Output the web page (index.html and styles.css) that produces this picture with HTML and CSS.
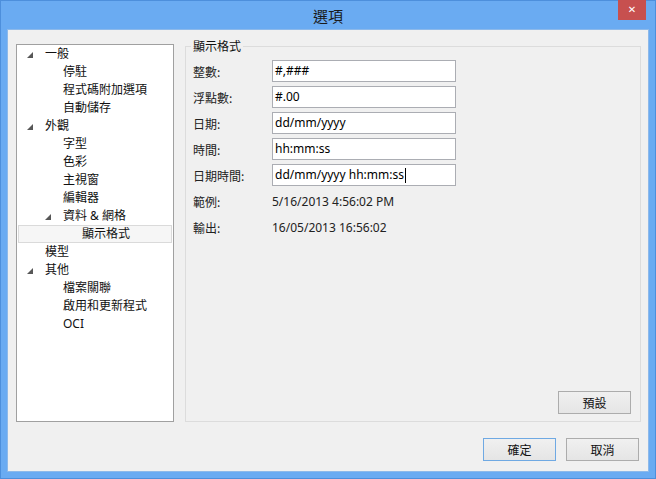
FILE: index.html
```html
<!DOCTYPE html>
<html lang="zh-Hant">
<head>
<meta charset="utf-8">
<title>選項</title>
<link rel="stylesheet" href="styles.css">
</head>
<body>
<div class="window">
  <div class="titlebar">
    <span></span>
    <span class="title">選項</span>
    <span class="close">&#x2715;</span>
  </div>
  <div class="content">
    <div class="main">
      <div class="tree">
        <div class="node l0"><span class="tw"><svg width="6" height="6" viewBox="0 0 6 6"><polygon points="6,0 6,6 0,6"/></svg></span>一般</div>
        <div class="node l1"><span class="tw"></span>停駐</div>
        <div class="node l1"><span class="tw"></span>程式碼附加選項</div>
        <div class="node l1"><span class="tw"></span>自動儲存</div>
        <div class="node l0"><span class="tw"><svg width="6" height="6" viewBox="0 0 6 6"><polygon points="6,0 6,6 0,6"/></svg></span>外觀</div>
        <div class="node l1"><span class="tw"></span>字型</div>
        <div class="node l1"><span class="tw"></span>色彩</div>
        <div class="node l1"><span class="tw"></span>主視窗</div>
        <div class="node l1"><span class="tw"></span>編輯器</div>
        <div class="node l1"><span class="tw"><svg width="6" height="6" viewBox="0 0 6 6"><polygon points="6,0 6,6 0,6"/></svg></span>資料 &amp; 網格</div>
        <div class="node l2 selected"><span class="tw"></span>顯示格式</div>
        <div class="node l0"><span class="tw"></span>模型</div>
        <div class="node l0"><span class="tw"><svg width="6" height="6" viewBox="0 0 6 6"><polygon points="6,0 6,6 0,6"/></svg></span>其他</div>
        <div class="node l1"><span class="tw"></span>檔案關聯</div>
        <div class="node l1"><span class="tw"></span>啟用和更新程式</div>
        <div class="node l1"><span class="tw"></span>OCI</div>
      </div>
      <fieldset class="group">
        <legend>顯示格式</legend>
        <div class="form">
          <span class="lbl">整數:</span><div class="box">#,###</div>
          <span class="lbl">浮點數:</span><div class="box">#.00</div>
          <span class="lbl">日期:</span><div class="box">dd/mm/yyyy</div>
          <span class="lbl">時間:</span><div class="box">hh:mm:ss</div>
          <span class="lbl">日期時間:</span><div class="box">dd/mm/yyyy hh:mm:ss<span class="caret"></span></div>
          <span class="lbl">範例:</span><span class="val">5/16/2013 4:56:02 PM</span>
          <span class="lbl">輸出:</span><span class="val">16/05/2013 16:56:02</span>
        </div>
        <div class="group-foot">
          <button class="btn">預設</button>
        </div>
      </fieldset>
    </div>
    <div class="buttons">
      <button class="btn default">確定</button>
      <button class="btn">取消</button>
    </div>
  </div>
</div>
</body>
</html>
```
FILE: styles.css
```css
html, body {
  margin: 0;
  padding: 0;
}
body {
  width: 656px;
  height: 479px;
  font-family: "Noto Sans", "Noto Sans CJK TC", sans-serif;
  font-size: 12px;
  color: #000;
}
.window {
  box-sizing: border-box;
  width: 656px;
  height: 479px;
  background: #6aabf2;
  border: 1px solid #4d8fdc;
  padding: 0 7px 7px 7px;
  display: flex;
  flex-direction: column;
}
.titlebar {
  height: 29px;
  display: grid;
  grid-template-columns: 1fr auto 1fr;
  align-items: start;
}
.title {
  font-family: "Noto Sans CJK TC", sans-serif;
  font-size: 15px;
  line-height: 29px;
  color: #1a1a1a;
}
.close {
  justify-self: end;
  width: 28px;
  height: 20px;
  margin-top: -1px;
  margin-right: 2px;
  background: #c7504f;
  color: #fff;
  font-family: "DejaVu Sans", sans-serif;
  font-size: 10px;
  font-weight: bold;
  line-height: 20px;
  text-align: center;
}
.content {
  flex: 1;
  background: #f0f0f0;
  display: flex;
  flex-direction: column;
  box-shadow: 0 0 0 1px #8db9ea;
}
.main {
  display: flex;
  padding: 14px 7px 0 8px;
  gap: 11px;
  height: 378px;
}
.tree {
  box-sizing: border-box;
  width: 158px;
  height: 378px;
  background: #fff;
  border: 1px solid #a0a0a0;
  display: flex;
  flex-direction: column;
}
.node {
  height: 18px;
  line-height: 18px;
  display: flex;
  align-items: center;
  white-space: nowrap;
  box-sizing: border-box;
  padding-left: 10px;
  font-family: "Noto Sans", "Noto Sans CJK TC", sans-serif;
  color: #111;
}
.node.l1 { padding-left: 28px; }
.node.l2 { padding-left: 46px; }
.tw {
  width: 18px;
  flex: none;
  display: flex;
  align-items: center;
}
.tw svg { fill: #575757; display: block; margin-top: 1px; }
.node.selected {
  margin: 0 1px;
  padding-left: 45px;
  background: #f6f6f6;
  border: 1px solid #dadada;
}
.group {
  box-sizing: border-box;
  flex: 1;
  margin: -6px 0 0 0;
  min-width: 0;
  border: 1px solid #dcdcdc;
  padding: 6px 9px 7px 7px;
  display: flex;
  flex-direction: column;
}
.group legend {
  padding: 0 2px;
  margin-left: -2px;
  line-height: 16px;
  font-family: "Noto Sans CJK TC", sans-serif;
  color: #111;
}
.form {
  display: grid;
  grid-template-columns: 79px 184px;
  grid-auto-rows: 22px;
  row-gap: 4px;
  align-items: center;
}
.lbl {
  font-family: "Noto Sans CJK TC", sans-serif;
  color: #222;
}
.box {
  box-sizing: border-box;
  height: 22px;
  border: 1px solid #abadb3;
  background: #fff;
  padding: 0 2px;
  line-height: 20px;
  color: #000;
  display: flex;
  align-items: center;
}
.caret {
  display: inline-block;
  width: 1px;
  height: 15px;
  background: #000;
  margin-left: 1px;
}
.val {
  color: #222;
}
.group-foot {
  margin-top: auto;
  display: flex;
  justify-content: flex-end;
}
.btn {
  box-sizing: border-box;
  width: 73px;
  height: 23px;
  border: 1px solid #acacac;
  background: linear-gradient(#f0f0f0, #e5e5e5);
  font-family: "Noto Sans CJK TC", sans-serif;
  font-size: 12px;
  color: #111;
  padding: 0;
  margin: 0;
}
.btn.default {
  border-color: #3c7fb1;
  border-color: #6fa9e3;
}
.buttons {
  display: flex;
  justify-content: flex-end;
  gap: 10px;
  padding: 16px 9px 10px 0;
}
```
